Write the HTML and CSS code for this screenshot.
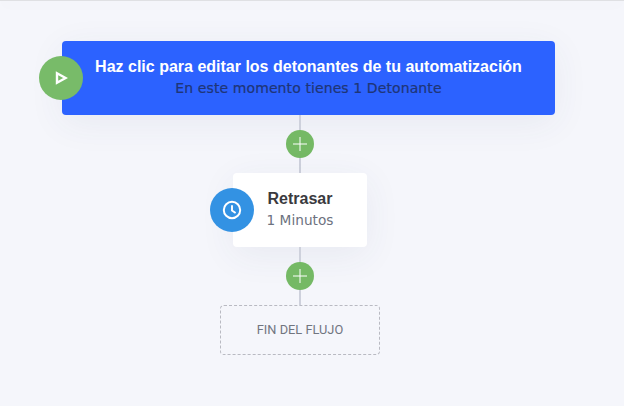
FILE: index.html
```html
<!DOCTYPE html>
<html lang="es">
<head>
<meta charset="utf-8">
<title>Automatización</title>
<link rel="stylesheet" href="styles.css">
</head>
<body>
<div class="topbar"></div>
<main class="flow">
  <section class="trigger">
    <span class="badge badge-green">
      <svg width="14" height="14" viewBox="0 0 14 14"><path d="M3 2.2 11.6 7 3 11.8Z" fill="none" stroke="#fff" stroke-width="2.4" stroke-linejoin="miter"/></svg>
    </span>
    <h1 class="trigger-title">Haz clic para editar los detonantes de tu automatización</h1>
    <p class="trigger-sub">En este momento tienes 1 Detonante</p>
  </section>
  <div class="connector">
    <button class="add" aria-label="Agregar">
      <svg width="14" height="14" viewBox="0 0 14 14"><path d="M7 0v14M0 7h14" stroke="#fff" stroke-width="1"/></svg>
    </button>
  </div>
  <section class="step">
    <span class="badge badge-blue">
      <svg width="20" height="20" viewBox="0 0 20 20" fill="none" stroke="#fff"><circle cx="10" cy="10" r="8.2" stroke-width="2"/><path d="M10 5.2V10.4L13.6 13" stroke-width="1.9"/></svg>
    </span>
    <h2 class="step-title">Retrasar</h2>
    <p class="step-sub">1 Minutos</p>
  </section>
  <div class="connector">
    <button class="add" aria-label="Agregar">
      <svg width="14" height="14" viewBox="0 0 14 14"><path d="M7 0v14M0 7h14" stroke="#fff" stroke-width="1"/></svg>
    </button>
  </div>
  <div class="end">FIN DEL FLUJO</div>
</main>
</body>
</html>
```
FILE: styles.css
```css
* { box-sizing: border-box; margin: 0; padding: 0; }
html, body { height: 100%; overflow: hidden; }
body {
  background: #f5f6fb;
  font-family: "Liberation Sans", Arial, sans-serif;
}
.topbar {
  height: 1px;
  background: #dfe0e3;
  box-shadow: 0 2px 14px rgba(60, 64, 90, 0.1);
}
.flow {
  width: 600px;
  padding-top: 40px;
  display: flex;
  flex-direction: column;
  align-items: center;
}
.trigger {
  position: relative;
  width: 493px;
  height: 74px;
  margin-left: 17px;
  padding-top: 16px;
  background: #2c62ff;
  border-radius: 4px;
  box-shadow: 0 8px 36px rgba(60, 70, 110, 0.07);
  text-align: center;
}
.trigger-title {
  font: 700 16px/20px "Liberation Sans", Arial, sans-serif;
  color: #fff;
}
.trigger-sub {
  margin-top: 2px;
  font: 500 14px/18px "DejaVu Sans", sans-serif;
  letter-spacing: 0.1px;
  color: #1f3576;
  -webkit-text-stroke: 0.2px #1f3576;
}
.badge {
  position: absolute;
  top: 15px;
  left: -23px;
  width: 44px;
  height: 44px;
  border-radius: 50%;
  display: flex;
  align-items: center;
  justify-content: center;
}
.badge-green { background: #78bb69; }
.badge-blue { background: #3392e3; }
.connector {
  position: relative;
  width: 2px;
  height: 58px;
  background: #ced1dc;
  display: flex;
  align-items: center;
  justify-content: center;
}
.add {
  flex: none;
  width: 28px;
  height: 28px;
  border: 0;
  border-radius: 50%;
  background: #75b965;
  display: flex;
  align-items: center;
  justify-content: center;
}
.step {
  position: relative;
  width: 134px;
  height: 74px;
  padding-top: 16px;
  background: #fff;
  border-radius: 4px;
  box-shadow: 0 8px 36px rgba(60, 70, 110, 0.07);
  text-align: center;
}
.step-title {
  font: 700 16px/20px "Liberation Sans", Arial, sans-serif;
  color: #3a3a3e;
}
.step-sub {
  margin-top: 2px;
  font: 500 13.7px/18px "DejaVu Sans", sans-serif;
  color: #6d7280;
}
.end {
  width: 160px;
  height: 50px;
  border: 1px dashed #b9bac2;
  border-radius: 4px;
  display: flex;
  align-items: center;
  justify-content: center;
  font: 400 12.8px/16px Roboto, "Liberation Sans", sans-serif;
  color: #71757f;
}
```
